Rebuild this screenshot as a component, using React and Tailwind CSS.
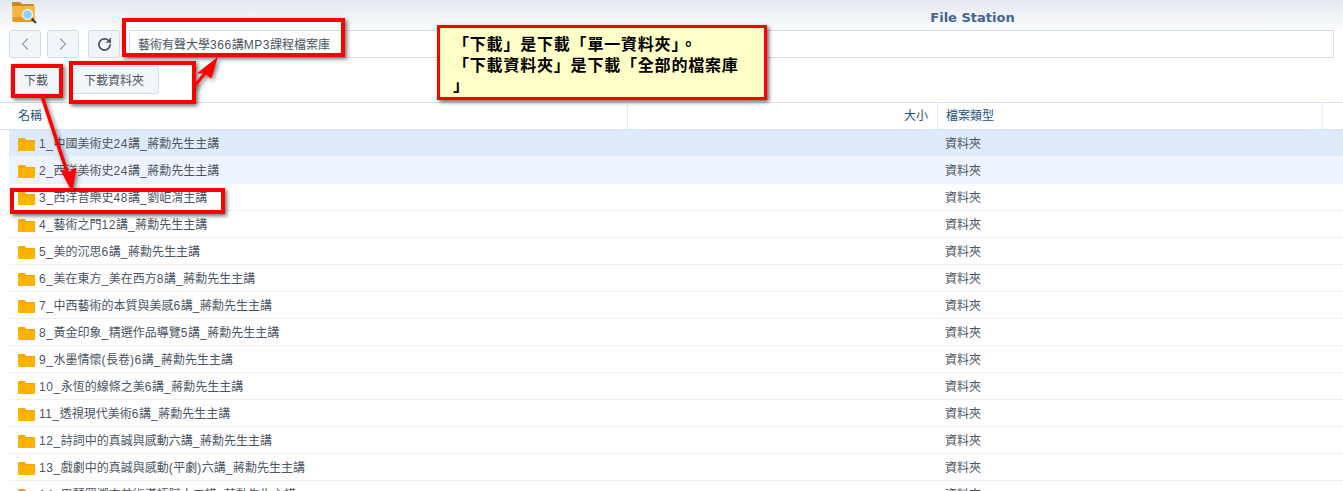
import React from 'react';
import { ChevronLeft, ChevronRight, RotateCw } from 'lucide-react';

const folders = [
  '1_中國美術史24講_蔣勳先生主講',
  '2_西洋美術史24講_蔣勳先生主講',
  '3_西洋音樂史48講_劉岠渭主講',
  '4_藝術之門12講_蔣勳先生主講',
  '5_美的沉思6講_蔣勳先生主講',
  '6_美在東方_美在西方8講_蔣勳先生主講',
  '7_中西藝術的本質與美感6講_蔣勳先生主講',
  '8_黃金印象_精選作品導覽5講_蔣勳先生主講',
  '9_水墨情懷(長卷)6講_蔣勳先生主講',
  '10_永恆的線條之美6講_蔣勳先生主講',
  '11_透視現代美術6講_蔣勳先生主講',
  '12_詩詞中的真誠與感動六講_蔣勳先生主講',
  '13_戲劇中的真誠與感動(平劇)六講_蔣勳先生主講',
  '14_思琴罪溯查美術漢語賦十二講_蔣勳先生主講',
];

// latin runs sit a little wider than the CJK next to them
const Mixed = ({ text }) =>
  text.split(/([0-9A-Z_()]+)/).map((part, i) =>
    i % 2 === 1 ? <span key={i} className="tracking-[0.55px]">{part}</span> : part
  );

const FolderIcon = () => (
  <svg width="17" height="14" viewBox="0 0 17 14" className="shrink-0">
    <path d="M0 2.500C0 1.500.6 1 1.500 1h4.600c.6 0 1 .3 1.300.7L8.200 3H17v2H0z" fill="#f5a800" />
    <path d="M0 4.400h17V13c0 .6-.4 1-1 1H1c-.6 0-1-.4-1-1z" fill="#ffb300" />
  </svg>
);

const AppIcon = () => (
  <svg width="26" height="26" viewBox="0 0 26 26">
    <path d="M1 3c0-.6.4-1 1-1h7l2 2h11c.6 0 1 .4 1 1v3H1z" fill="#c98a1f" />
    <path d="M1 6h22c.6 0 1 .4 1 1l-.5 14c0 .6-.4 1-1 1H2.500c-.6 0-1-.4-1-1z" fill="#f4b63f" />
    <path d="M1.500 17h22v4c0 .6-.4 1-1 1h-20c-.6 0-1-.4-1-1z" fill="#e49a25" />
    <line x1="20" y1="18" x2="25" y2="23" stroke="#3b3b3b" strokeWidth="2" />
    <circle cx="16.500" cy="14.500" r="5" fill="#8fd3ef" stroke="#e8eef2" strokeWidth="1.500" />
  </svg>
);

const Callout = ({ className }) => (
  <div className={`absolute border-4 border-[#ff0000] shadow-[2px_2px_4px_rgba(0,0,0,0.55)] ${className}`} />
);

const Row = ({ name, index }) => {
  let bg = 'bg-white';
  if (index === 0) bg = 'bg-[#dfebfa]';
  if (index === 1) bg = 'bg-[#edf4fd]';
  return (
    <div className={`flex h-[27px] shrink-0 items-center border-b border-[#ebf0f5] ${bg}`}>
      <div className="flex w-[619px] items-center gap-[4px] pl-[9px] pt-[2px]">
        <FolderIcon />
        <span className="whitespace-nowrap"><Mixed text={name} /></span>
      </div>
      <div className="w-[309px]" />
      <div className="pl-[8px] pt-[2px]">資料夾</div>
    </div>
  );
};

export default function App() {
  return (
    <div className="relative h-[491px] w-[1343px] overflow-hidden bg-white font-['Liberation_Sans','Noto_Sans_CJK_TC',sans-serif] text-[12px] text-[#4a5563]">
      <div className="relative flex h-[30px] items-center justify-center bg-gradient-to-b from-[#e4e8f0] to-[#fbfcfd] pt-[5px]">
        <span className="absolute left-[11px] top-0"><AppIcon /></span>
        <span className="ml-[602px] font-['DejaVu_Sans',sans-serif] text-[13px] font-bold text-[#41668f]">File Station</span>
      </div>

      <div className="flex h-[28px] items-center px-[9px]">
        <button className="flex h-[28px] w-[32px] items-center justify-center rounded-[3px] border border-[#d3dce6] bg-[#f2f6fa] text-[#9aa7b5]">
          <ChevronLeft size={20} strokeWidth={1.75} />
        </button>
        <button className="ml-[6px] flex h-[28px] w-[32px] items-center justify-center rounded-[3px] border border-[#d3dce6] bg-[#f2f6fa] text-[#9aa7b5]">
          <ChevronRight size={20} strokeWidth={1.75} />
        </button>
        <button className="ml-[9px] flex h-[28px] w-[32px] items-center justify-center rounded-[3px] border border-[#d3dce6] bg-[#f2f6fa] text-[#4a5563]">
          <RotateCw size={15} strokeWidth={2.75} />
        </button>
        <div className="ml-[9px] flex h-[28px] flex-1 items-center border border-[#d3dce6] pl-[8px] pt-[2px] text-[#4a5563]">
          <span><Mixed text="藝術有聲大學366講MP3課程檔案庫" /></span>
        </div>
      </div>

      <div className="flex h-[44px] items-center gap-[7px] px-[10px] py-[8px]">
        <button className="flex h-[28px] w-[52px] items-center justify-center rounded-[3px] border border-[#d3dce6] bg-[#f2f6fa] pt-[2px]">下載</button>
        <button className="flex h-[28px] w-[90px] items-center justify-center rounded-[3px] border border-[#d3dce6] bg-[#f2f6fa] pt-[2px]">下載資料夾</button>
      </div>

      <div className="flex h-[28px] border-y border-[#d7e3ef] text-[#25527f]">
        <div className="flex h-full w-[628px] items-center border-r border-[#e3ebf3] pl-[18px]">名稱</div>
        <div className="flex h-full w-[310px] items-center justify-end border-r border-[#e3ebf3] pr-[9px]">大小</div>
        <div className="flex h-full w-[385px] items-center border-r border-[#e3ebf3] pl-[8px]">檔案類型</div>
      </div>

      <div className="flex flex-col pl-[9px]">
        {folders.map((name, i) => (
          <Row key={name} name={name} index={i} />
        ))}
      </div>

      {/* annotations drawn on top of the screenshot */}
      <Callout className="left-[122px] top-[18px] h-[39px] w-[223px]" />
      <Callout className="left-[11px] top-[64px] h-[34px] w-[52px]" />
      <Callout className="left-[69px] top-[61px] h-[43px] w-[127px]" />
      <Callout className="left-[10px] top-[188px] h-[26px] w-[215px]" />

      <svg className="absolute left-0 top-0" width="1343" height="491" viewBox="0 0 1343 491">
        <g fill="#ff0000" stroke="#ff0000" style={{ filter: 'drop-shadow(2px 2px 2px rgba(0,0,0,0.5))' }}>
          <line x1="42" y1="96" x2="68" y2="175" strokeWidth="3.500" />
          <path d="M72 191 L61 170 L68 173 L76 168 Z" strokeWidth="1" />
          <line x1="193" y1="88" x2="206" y2="72" strokeWidth="3" />
          <path d="M217 58 L198 73 L205 73 L211 78 Z" strokeWidth="1" />
        </g>
      </svg>

      <div className="absolute left-[437px] top-[25px] h-[75px] w-[330px] border-[3px] border-[#ff0000] bg-[#ffffc8] pl-[13px] pt-[7px] text-[16px] leading-[20.5px] font-bold tracking-[0.8px] text-black shadow-[2px_2px_4px_rgba(0,0,0,0.6)]">
        「下載」是下載「單一資料夾」。<br />
        「下載資料夾」是下載「全部的檔案庫<br />
        」
      </div>
    </div>
  );
}
